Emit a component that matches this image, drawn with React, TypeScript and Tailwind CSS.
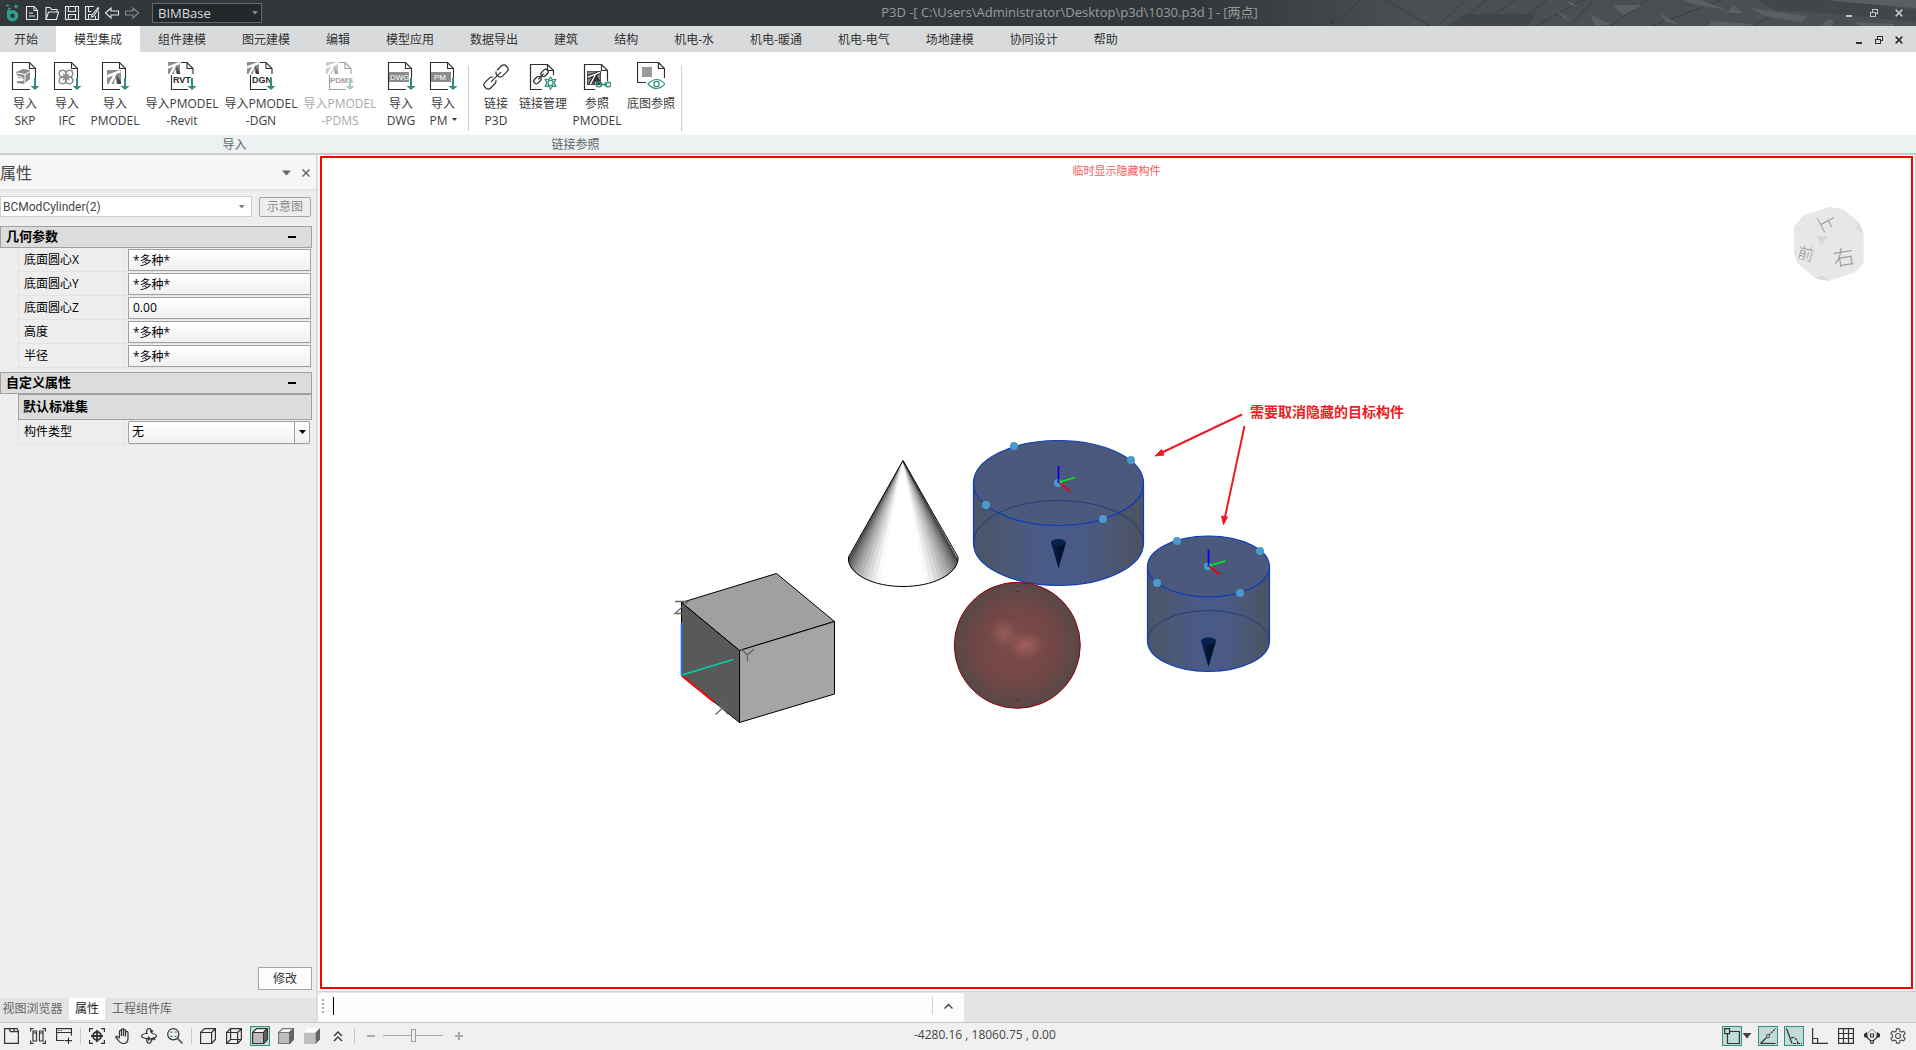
import React, { useState } from 'react';

const TABS = [
  '开始', '模型集成', '组件建模', '图元建模', '编辑', '模型应用', '数据导出', '建筑',
  '结构', '机电-水', '机电-暖通', '机电-电气', '场地建模', '协同设计', '帮助',
];

const GREEN = '#2f8f7c';

/* ---------- window controls ---------- */

const WindowControls: React.FC<{ className: string; gap: string }> = ({ className, gap }) => (
  <div className={`flex items-center ${gap} ${className}`}>
    <button aria-label="最小化">
      <svg width="10" height="10" viewBox="0 0 10 10" shapeRendering="crispEdges"><path d="M2 7h6v2H2z" fill="currentColor" /></svg>
    </button>
    <button aria-label="还原">
      <svg width="10" height="10" viewBox="0 0 10 10" shapeRendering="crispEdges" fill="none" stroke="currentColor">
        <path d="M1.5 4.5h5v4h-5zM1 4h6M3.5 4V1.5h5v4H7M3 1h6" />
      </svg>
    </button>
    <button aria-label="关闭">
      <svg width="10" height="10" viewBox="0 0 10 10" fill="none" stroke="currentColor" strokeWidth="1.7"><path d="M1.7 1.7l6.6 6.6M8.3 1.7L1.7 8.3" /></svg>
    </button>
  </div>
);

/* ---------- title bar ---------- */

const QuickButton: React.FC<{ label: string; dim?: boolean; children: React.ReactNode }> = ({ label, dim, children }) => (
  <button aria-label={label} className={`flex h-5 w-5 items-center justify-center ${dim ? 'text-[#85898b]' : 'text-[#e4e6e6]'}`}>
    <svg width="16" height="16" viewBox="0 0 16 16" fill="none" stroke="currentColor" strokeWidth="1.1">{children}</svg>
  </button>
);

const TitleBar: React.FC = () => (
  <header className="relative flex h-[26px] shrink-0 items-center bg-[#32373a] pl-0.5">
    <div className="absolute inset-y-0 right-0 w-[720px] overflow-hidden bg-linear-to-r from-[#32373a] to-[#4a4f52] to-30%">
      <svg width="720" height="26" viewBox="0 0 720 26" fill="none">
        <g stroke="#3a3f42" strokeWidth="1">
          <path d="M81 0L68 26M164 0l-23 22M190 0l44 26M270 0l-28 26M290 0l-30 26M319 0l-38 26M351 0l-34 26M386 0l-46 26" />
          <path d="M134 22h5" strokeWidth="4" />
          <path d="M398 0l-24 26M452 0l-38 26M526 0l-70 26M600 0l-42 26" />
        </g>
        <g fill="#5a5f62">
          <path d="M417 5l30 0-20 10zM395 15l20 9-16 2zM487 0h18l26 10-20-3-14-3zM555 8l56 8-5 6-38-6zM531 13l6-8 10 8zM465 13l18 12-14-3zM515 21l40 3v2h-42zM630 0h90v8l-50-4zM625 26l6-6 6 0 0 6zM658 22l40 2v2h-34zM358 8l18 13-8-3zM370 0l12 6-8-1z" />
        </g>
        <g fill="#3e4346" opacity=".7"><path d="M560 0h70l60 6 30 4v12l-80-8-60-4zM270 14h70l-8 12h-80z" /></g>
      </svg>
    </div>
    <div className="relative flex h-5 w-5 items-center justify-center">
      <svg width="16" height="18" viewBox="0 0 16 18" fill="none">
        <circle cx="8.5" cy="11.8" r="4" stroke="#2fa08c" strokeWidth="3.4" />
        <path d="M2 1.5h3M4 4.5h3M12 .5v4M10 2.5h4" stroke="#2fa08c" strokeWidth="1.3" />
        <path d="M3 6.5l3-1.5v4l-3 3z" fill="#2fa08c" />
      </svg>
    </div>
    <div className="relative flex">
      <QuickButton label="新建"><path d="M2.5 1.5h7.5l3.5 4v9h-11zM10 1.5v4h3.5M5 8h4M5 11h6" /></QuickButton>
      <QuickButton label="打开"><path d="M2 14.5V2.5h4l1.5 2h5.5v2.5M2 14.5h10.5l2-7.500H4.5z" /></QuickButton>
      <QuickButton label="保存"><path d="M1.5 1.5h13v13h-13zM4.5 1.5v5h7v-5M4.5 14.5v-5h7v5M6.5 12h1" /></QuickButton>
      <QuickButton label="另存为"><path d="M10 1.5H1.5v13h13V6M4.5 1.5v5h3M4.5 14.5v-5h3M11.5 14.5V11M14.5 2L8 10l-.5 2 2-.8L15 3" /></QuickButton>
      <QuickButton label="撤销"><path d="M1.5 8l5.5-5v3h7.5v4H7v3z" /></QuickButton>
      <QuickButton label="重做" dim><path d="M14.5 8L9 3v3H1.5v4H9v3z" /></QuickButton>
    </div>
    <div className="relative ml-2.5 w-[110px]">
      <select aria-label="工作空间" className="block h-5 w-full appearance-none border border-[#65696b] bg-[#25282a] pl-[5px] text-[13px] leading-4 text-[#dcdcdc] outline-none">
        <option>BIMBase</option>
      </select>
      <svg className="pointer-events-none absolute top-2 right-1" width="6" height="4" viewBox="0 0 6 4"><path d="M0 0h6L3 3.5z" fill="#8b8f91" /></svg>
    </div>
    <h1 className="relative flex-1 pl-12 text-center text-[13px] text-[#999c9d]">P3D -[ C:\Users\Administrator\Desktop\p3d\1030.p3d ] - [两点]</h1>
    <WindowControls className="relative pr-3 pl-[15px] text-[#c3c5c6]" gap="gap-[15px]" />
  </header>
);

/* ---------- ribbon ---------- */

const DownArrow: React.FC = () => (
  <path d="M22 16h2v8h3.5L23 28l-4.5-4H22z" fill={GREEN} />
);

const ModelLogo: React.FC<{ x: number; y: number; size?: number }> = ({ x, y, size = 14 }) => (
  <svg x={x} y={y} width={size} height={size} viewBox="0 0 14 14">
    <path d="M0 0h14v14H0z" fill="#8c8c8c" />
    <path d="M0 5L13 0l1 2.5-4.5 1.500L4.500 14H1.500L6 5.500 0 8z" fill="#fff" />
    <path d="M9.500 5L14 12v2h-3.500z" fill="#444" />
    <path d="M8 7l2 7H7z" fill="#fff" />
  </svg>
);

const ImportIcon: React.FC<{ kind: string }> = ({ kind }) => {
  const wide = ['RVT', 'DGN', 'PDMS'].includes(kind);
  return (
    <svg className="overflow-visible" width={wide ? 28 : 26} height="28" viewBox={wide ? '0 0 28 28' : '0 0 26 28'} fontFamily="Liberation Sans, sans-serif" fontWeight="bold">
      <path
        d={wide ? 'M13 .5h6l6 6V12M19 .5v6h6M3.5 13v14.5H20' : 'M18 27.5H.5V.5h17l6 6V17M17.5 .5v6h6'}
        stroke="#2e2e2e"
        strokeWidth="1.1"
        fill="none"
      />
      {kind === 'SKP' && (
        <g>
          <path d="M4 10l7-3 7 1v9l-6 5-7-1 0-2 6 0 1-2-6-1z" fill="#8f8f8f" />
          <path d="M5 11l8 1.5V22M5 14l5 1.5v2l-5-.5M13 12.500l5-3" stroke="#fff" fill="none" />
        </g>
      )}
      {kind === 'IFC' && (
        <g fill="none" stroke="#8f8f8f" strokeWidth="1.5">
          <circle cx="8.500" cy="11.500" r="3.3" /><circle cx="15.500" cy="11.500" r="3.3" />
          <circle cx="8.500" cy="18.500" r="3.3" /><circle cx="15.500" cy="18.500" r="3.3" />
          <path d="M9 12l6 6M15 12l-6 6" />
        </g>
      )}
      {kind === 'PMODEL' && <ModelLogo x={5} y={8} />}
      {wide && (
        <>
          <ModelLogo x={0} y={0} size={12} />
          <text x={kind === 'PDMS' ? 4 : 5} y="21" fontSize={kind === 'PDMS' ? 8 : 9} fill="#2b2b2b">{kind}</text>
        </>
      )}
      {(kind === 'DWG' || kind === 'PM') && (
        <>
          <path d="M1 10h20v10H1z" fill="#8c8c8c" />
          <text x={kind === 'PM' ? 4 : 2} y="18" fontSize="8" fontWeight="normal" fill="#fff">{kind}</text>
        </>
      )}
      <g transform={wide ? 'translate(1 0)' : undefined}><DownArrow /></g>
    </svg>
  );
};

const LinkIcon: React.FC<{ kind: string }> = ({ kind }) => (
  <svg width="28" height="28" viewBox="0 0 28 28" fill="none" stroke="#2e2e2e" strokeWidth="1.2">
    {kind === 'link' && (
      <g transform="translate(14 15) rotate(-45)">
        <rect x="-15" y="-4" width="13" height="8" rx="3.5" strokeDasharray="32 4" strokeDashoffset="-14" />
        <rect x="2" y="-4" width="13" height="8" rx="3.5" strokeDasharray="34 4" />
        <path d="M-7 0H7" />
      </g>
    )}
    {kind === 'manage' && (
      <>
        <path d="M13 27.5H1.5v-25h17l6 6V13M18.5 2.5v6h6" />
        <g transform="translate(12 14.5) rotate(-45)">
          <rect x="-9" y="-2.5" width="8" height="5" rx="2.2" />
          <rect x="1" y="-2.5" width="8" height="5" rx="2.2" />
          <path d="M-4 0h8" />
        </g>
        <path d="M21.5 15l1.8 2.8 3.5-.4-1.600 3.600 1.600 3.400-3.5-.2-1.800 3-1.800-3-3.500.2 1.600-3.400-1.600-3.600 3.500.4z" stroke={GREEN} fill="#fff" />
        <circle cx="21.5" cy="21" r="2.6" stroke={GREEN} />
      </>
    )}
    {kind === 'model' && (
      <>
        <path d="M12 27.5H1.5v-25h17l6 6V19M18.5 2.5v6h6" />
        <ModelLogo x={4} y={9} />
        <path d="M13 22.5c0-3 6-3 6 0s-6 3-6 0M22 22.5c0-3 6-3 6 0s-6 3-6 0M17 22.5h7" stroke={GREEN} strokeWidth="1.4" />
      </>
    )}
    {kind === 'view' && (
      <>
        <path d="M9 20.5H.5V.5h21l6 6V16M21.5 .5v6h6" />
        <path d="M5 5h10v10H5z" fill="#999" stroke="none" />
        <path d="M11 22q8.500-9 17 0q-8.500 9-17 0z" stroke={GREEN} />
        <circle cx="19.5" cy="22" r="2.6" stroke={GREEN} />
      </>
    )}
  </svg>
);

interface RibbonButtonProps {
  icon: React.ReactNode;
  lines: string[];
  width: string;
  disabled?: boolean;
  menu?: boolean;
}

const RibbonButton: React.FC<RibbonButtonProps> = ({ icon, lines, width, disabled, menu }) => (
  <button disabled={disabled} className={`flex shrink-0 flex-col items-center gap-[5px] text-xs text-[#3c3c3c] disabled:opacity-45 ${width}`}>
    {icon}
    <span className="flex flex-col items-center leading-[17px] whitespace-nowrap">
      <span>{lines[0]}</span>
      {lines[1] && (
        <span className="flex items-center gap-1">
          {lines[1]}
          {menu && <svg width="5" height="8" viewBox="0 0 5 8"><path d="M0 1h5L2.5 4z" fill="#333" /></svg>}
        </span>
      )}
    </span>
  </button>
);

const RibbonGroup: React.FC<{ title: string; children: React.ReactNode; className: string }> = ({ title, children, className }) => (
  <section className="flex flex-col">
    <div className={`flex h-[83px] items-start pt-2.5 ${className}`}>
      {children}
      <div className="ml-1 h-[65px] w-px self-center bg-[#cfcfcf]" />
    </div>
    <h2 className="h-[18px] bg-[#edf1f2] pt-px text-center text-xs leading-[17px] text-[#606468]">{title}</h2>
  </section>
);

const Ribbon: React.FC = () => {
  const [active, setActive] = useState('模型集成');

  return (
    <div className="shrink-0 border-b-2 border-[#c9cccf]">
      <nav className="flex h-[26px] bg-[#d9dadc]">
        <div className="-ml-1 flex flex-1">
          {TABS.map(t => (
            <button
              key={t}
              onClick={() => setActive(t)}
              className={`px-[18px] pt-0.5 text-xs text-[#333] ${t === active ? 'bg-white' : ''}`}
            >
              {t}
            </button>
          ))}
        </div>
        <WindowControls className="pt-px pr-3 text-[#2e3133]" gap="gap-[10px]" />
      </nav>
      <div className="flex bg-white">
        <RibbonGroup title="导入" className="pl-1">
          <RibbonButton width="w-[42px]" icon={<ImportIcon kind="SKP" />} lines={['导入', 'SKP']} />
          <RibbonButton width="w-[42px]" icon={<ImportIcon kind="IFC" />} lines={['导入', 'IFC']} />
          <RibbonButton width="w-[54px]" icon={<ImportIcon kind="PMODEL" />} lines={['导入', 'PMODEL']} />
          <RibbonButton width="w-[80px]" icon={<ImportIcon kind="RVT" />} lines={['导入PMODEL', '-Revit']} />
          <RibbonButton width="w-[78px]" icon={<ImportIcon kind="DGN" />} lines={['导入PMODEL', '-DGN']} />
          <RibbonButton width="w-[80px]" icon={<ImportIcon kind="PDMS" />} lines={['导入PMODEL', '-PDMS']} disabled />
          <RibbonButton width="w-[42px]" icon={<ImportIcon kind="DWG" />} lines={['导入', 'DWG']} />
          <RibbonButton width="w-[42px]" icon={<ImportIcon kind="PM" />} lines={['导入', 'PM']} menu />
        </RibbonGroup>
        <RibbonGroup title="链接参照" className="pl-1.5">
          <RibbonButton width="w-[42px]" icon={<LinkIcon kind="link" />} lines={['链接', 'P3D']} />
          <RibbonButton width="w-[52px]" icon={<LinkIcon kind="manage" />} lines={['链接管理']} />
          <RibbonButton width="w-[56px]" icon={<LinkIcon kind="model" />} lines={['参照', 'PMODEL']} />
          <RibbonButton width="w-[52px]" icon={<LinkIcon kind="view" />} lines={['底图参照']} />
        </RibbonGroup>
        <div className="flex flex-1 flex-col justify-end"><div className="h-[18px] bg-[#edf1f2]" /></div>
      </div>
    </div>
  );
};

/* ---------- property panel ---------- */

const FIELDS = [
  { id: 'cx', label: '底面圆心X', value: '*多种*' },
  { id: 'cy', label: '底面圆心Y', value: '*多种*' },
  { id: 'cz', label: '底面圆心Z', value: '0.00' },
  { id: 'height', label: '高度', value: '*多种*' },
  { id: 'radius', label: '半径', value: '*多种*' },
];

const SectionHeader: React.FC<{ title: string }> = ({ title }) => (
  <h3 className="flex h-[22px] items-center justify-between border border-[#a0a0a0] bg-[#dcdcdc] pr-[15px] pl-[5px] text-[13px] font-bold text-black">
    {title}
    <button aria-label={`折叠${title}`} className="flex h-4 items-center"><span className="h-0.5 w-2 bg-black" /></button>
  </h3>
);

const PropertyPanel: React.FC = () => (
  <aside className="flex w-[316px] shrink-0 flex-col bg-[#eeeeee]">
    <div className="flex h-[36px] items-center justify-between border-b-2 border-[#e4e4e4] bg-[#f6f6f6] pt-0.5 pr-1.5">
      <h2 className="text-base text-[#444]">属性</h2>
      <div className="flex items-center gap-[11px] text-[#666]">
        <button aria-label="选项"><svg width="9" height="6" viewBox="0 0 9 6"><path d="M0 .5h9L4.500 5.500z" fill="currentColor" /></svg></button>
        <button aria-label="关闭面板"><svg width="8" height="8" viewBox="0 0 8 8" stroke="currentColor" strokeWidth="1.5"><path d="M.5 .5l7 7M7.500 .5l-7 7" /></svg></button>
      </div>
    </div>
    <div className="flex items-center gap-[7px] py-[5px] pr-[5px]">
      <div className="relative flex-1">
        <select aria-label="构件" className="block h-[21px] w-full appearance-none border border-[#cfcfcf] bg-white pl-0.5 font-[Roboto,sans-serif] text-xs leading-4 text-[#444] outline-none">
          <option>BCModCylinder(2)</option>
        </select>
        <svg className="pointer-events-none absolute top-[9px] right-[7px]" width="6" height="4" viewBox="0 0 6 4"><path d="M0 0h5.500L2.700 3.500z" fill="#777" /></svg>
      </div>
      <button className="h-[20px] w-[52px] rounded-[2px] border border-[#a6a6a6] text-xs leading-4 text-[#8a8a8a]">示意图</button>
    </div>
    <div className="mt-1 flex flex-1 flex-col pr-1 text-xs text-black">
      <SectionHeader title="几何参数" />
      {FIELDS.map(f => (
        <div key={f.id} className="ml-[18px] flex h-[24px] items-center border-b border-l border-[#e3e3e3]">
          <label htmlFor={f.id} className="flex h-full w-[106px] items-center border-r border-[#e3e3e3] pl-[5px]">{f.label}</label>
          <input id={f.id} defaultValue={f.value} className="mr-px ml-[3px] h-[22px] min-w-0 flex-1 border border-[#a0a0a0] bg-linear-to-b from-white to-[#f0f0f0] pl-1 outline-none" />
        </div>
      ))}
      <div className="mt-1"><SectionHeader title="自定义属性" /></div>
      <h4 className="ml-[18px] flex h-[26px] items-center border border-[#a0a0a0] bg-[#dcdcdc] pl-1 text-[13px] font-bold">默认标准集</h4>
      <div className="ml-[18px] flex h-[25px] items-center border-b border-l border-[#e3e3e3]">
        <label htmlFor="type" className="flex h-full w-[106px] items-center border-r border-[#e3e3e3] pl-[5px]">构件类型</label>
        <div className="relative mr-0.5 ml-[3px] flex-1">
          <select id="type" className="block h-[23px] w-full appearance-none rounded-[2px] border border-[#a0a0a0] bg-linear-to-b from-white to-[#f0f0f0] pl-[3px] leading-4 outline-none">
            <option>无</option>
          </select>
          <div className="pointer-events-none absolute inset-y-0 right-0 flex w-4 items-center justify-center border-l border-[#a0a0a0]">
            <svg width="7" height="4" viewBox="0 0 7 4"><path d="M0 0h7L3.5 4z" fill="#000" /></svg>
          </div>
        </div>
      </div>
      <button className="mt-auto mb-2 h-[23px] w-[54px] self-end border border-[#a6a6a6] bg-[#fdfdfd] leading-4 text-[#333]">修改</button>
    </div>
    <div className="flex h-6 bg-[#e4e4e4] pb-0.5 text-xs text-[#666]">
      <button className="w-[69px] pr-1">视图浏览器</button>
      <button className="w-[36px] bg-white text-[#222]">属性</button>
      <button className="px-[7px]">工程组件库</button>
    </div>
  </aside>
);

/* ---------- 3D viewport ---------- */

// grey level around the cone base, 0 = left silhouette, 1 = right silhouette
const coneShade = (t: number) => {
  const d = Math.min(t / 0.36, (1 - t) / 0.36, 1);
  return Math.round(48 + 207 * Math.pow(d, 0.85));
};

const Cone: React.FC = () => {
  const n = 30;
  const pt = (i: number) => {
    const a = Math.PI - (i / n) * Math.PI;
    return `${(903 + 54.5 * Math.cos(a)).toFixed(1)} ${(559 + 27.5 * Math.sin(a)).toFixed(1)}`;
  };
  return (
    <g>
      {Array.from({ length: n }, (_, i) => {
        const g = coneShade((i + 0.5) / n);
        const c = `rgb(${g},${g},${g})`;
        return <path key={i} d={`M903 461L${pt(i)}L${pt(i + 1)}z`} fill={c} stroke={c} strokeWidth=".8" strokeLinejoin="round" />;
      })}
      <path d="M903 460.5L848.5 557v3c2 15 25 26.500 54.5 26.500s52.500-11.500 55-26.500v-3z" fill="none" stroke="#000" />
    </g>
  );
};

interface CylinderProps {
  cx: number;
  top: number;
  bottom: number;
  rx: number;
  arrowY: number;
  grips: number[][];
}

const Cylinder: React.FC<CylinderProps> = ({ cx, top, bottom, rx, arrowY, grips }) => {
  const ry = rx / 2;
  return (
    <g>
      <path d={`M${cx - rx} ${top}V${bottom}a${rx} ${ry} 0 0 0 ${2 * rx} 0V${top}z`} fill="url(#side)" />
      <ellipse cx={cx} cy={top} rx={rx} ry={ry} fill="#4a597c" />
      <path d={`M${cx - rx} ${bottom}a${rx} ${ry} 0 0 1 ${2 * rx} 0`} fill="none" stroke="#253a78" />
      <g fill="none" stroke="#0a3cbc" strokeWidth="1.2">
        <ellipse cx={cx} cy={top} rx={rx} ry={ry} />
        <path d={`M${cx - rx} ${top}V${bottom}a${rx} ${ry} 0 0 0 ${2 * rx} 0V${top}`} />
      </g>
      <path d={`M${cx - 7.5} ${arrowY}h15l-7.5 26z`} fill="url(#tip)" />
      <ellipse cx={cx} cy={arrowY} rx="7.5" ry="3.5" fill="#04214f" />
      {grips.map(([x, y]) => <circle key={x} cx={x} cy={y} r="4" fill="#4a9bcc" />)}
      <circle cx={cx - 0.5} cy={top} r="4" fill="#4a9bcc" />
      <g strokeWidth="1.7">
        <path d={`M${cx} ${top}v-17`} stroke="#0000f0" />
        <path d={`M${cx + 1} ${top - 1}l16 -4.5`} stroke="#00f000" />
        <path d={`M${cx + 1} ${top}l10 8`} stroke="#f00000" />
      </g>
    </g>
  );
};

const ViewCube: React.FC = () => (
  <svg className="absolute top-[49px] right-[47px]" width="70" height="74" viewBox="162 171 210 222" fontFamily="Noto Sans CJK SC, sans-serif" fontWeight="300" fill="#999">
    <path d="M267 171l41 6 48 38 15 35v88l-25 28-78 26-40-6-56-46-10-30v-80l28-34z" fill="#e7e7e7" />
    <path d="M226 257l41 3-24 31zM356 217l14 33-24-12zM243 374l25 18-40-6z" fill="#dadada" />
    <path d="M172 222l54 35 17 34v84M267 260l79-22M243 291l24-31" stroke="#efefef" strokeWidth="2" fill="none" />
    <text x="260" y="236" fontSize="54" textAnchor="middle" transform="rotate(62 260 217)">上</text>
    <text x="198" y="329" fontSize="48" textAnchor="middle" transform="rotate(14 198 310)">前</text>
    <text x="311" y="345" fontSize="64" textAnchor="middle" transform="rotate(-10 311 322)">右</text>
  </svg>
);

const Viewport: React.FC = () => (
  <div className="relative mt-px mr-0.5 ml-0.5 flex-1 overflow-hidden border-2 border-[#ff0000] bg-white">
    <svg className="absolute inset-0 h-full w-full">
      <defs>
        <linearGradient id="side">
          <stop offset="0" stopColor="#4c5566" />
          <stop offset=".4" stopColor="#4a5a86" />
          <stop offset=".65" stopColor="#4a5a86" />
          <stop offset="1" stopColor="#4c5360" />
        </linearGradient>
        <linearGradient id="tip">
          <stop offset="0" stopColor="#052050" />
          <stop offset="1" stopColor="#020b1c" />
        </linearGradient>
        <radialGradient id="ball">
          <stop offset="0" stopColor="#7c4a48" />
          <stop offset=".6" stopColor="#724746" />
          <stop offset="1" stopColor="#574848" />
        </radialGradient>
        <radialGradient id="glow">
          <stop offset="0" stopColor="#a86462" />
          <stop offset="1" stopColor="#a86462" stopOpacity="0" />
        </radialGradient>
      </defs>
      <g transform="translate(-322 -158)">
        <g stroke="#000" strokeLinejoin="round">
          <path d="M681.5 602.5L776.5 573.5L834.5 621.5L739.5 650.5z" fill="#a0a0a0" />
          <path d="M681.5 602.5L739.5 650.5V722.5L681.5 675.5z" fill="#595959" />
          <path d="M739.5 650.5L834.5 621.5V694L739.5 722.5z" fill="#a5a5a5" />
        </g>
        <g strokeWidth="1.7">
          <path d="M681.5 623v53" stroke="#1e78ff" />
          <path d="M682 675l51-15.5" stroke="#00d2a0" />
          <path d="M682 676l32 26" stroke="#ff0000" />
        </g>
        <g stroke="#666" strokeWidth="1.3" fill="none">
          <path d="M675 601.5h13L675 613.5h13" />
          <path d="M741 649l6.5 6 6.5-6M747.5 655v6" />
          <path d="M728.5 702.5l-13 12M719 705l9.5 9.5" />
        </g>
        <Cone />
        <Cylinder cx={1058.5} top={483} bottom={543} rx={85} arrowY={542.5} grips={[[1014, 446], [1131, 460], [986, 505], [1103, 519]]} />
        <Cylinder cx={1208.5} top={566.5} bottom={641} rx={61} arrowY={641} grips={[[1177, 541], [1260, 551], [1157, 583], [1240, 593]]} />
        <circle cx="1017.3" cy="645.3" r="63" fill="url(#ball)" stroke="#960000" />
        <circle cx="1004" cy="633" r="15" fill="url(#glow)" opacity=".65" />
        <ellipse cx="1026" cy="645.5" rx="19" ry="14" fill="url(#glow)" opacity=".85" />
        <path d="M1017 591h1v1h-1zM1017 700h1v1h-1z" fill="#300" />
        <g stroke="#ed1c24" strokeWidth="2" fill="#ed1c24">
          <path d="M1242 414.5L1162 452.5" />
          <path d="M1244.5 426L1225 517" />
          <path d="M1155 456l6.5-6.500 2.500 5.500zM1223.5 524.5l-2-8.500 6 1z" strokeWidth="1" />
        </g>
        <text x="1250" y="417" fontSize="14" fontWeight="bold" fill="#ed1c24">需要取消隐藏的目标构件</text>
      </g>
    </svg>
    <p className="relative pt-[5px] text-center text-[11px] leading-4 text-[#ff5555]">临时显示隐藏构件</p>
    <ViewCube />
  </div>
);

const CommandLine: React.FC = () => (
  <div className="flex h-[31px] shrink-0 border-t border-[#d2d2d2] bg-[#e5e5e5] pt-px">
    <div className="flex w-[646px] items-center rounded-[3px] bg-[#fdfdfd] pb-1">
      <svg className="ml-1" width="3" height="16" viewBox="0 0 3 16"><path d="M0 1h2v2H0zM0 5h2v2H0zM0 9h2v2H0zM0 13h2v2H0z" fill="#aaa" /></svg>
      <label className="ml-2 flex h-[18px] flex-1 items-center border-l border-black">
        <input aria-label="命令行" className="w-full bg-transparent pl-1 text-xs outline-none" />
      </label>
      <button aria-label="展开" className="flex h-[17px] w-8 items-center justify-center border-l border-[#d0d0d0]">
        <svg width="9" height="6" viewBox="0 0 9 6" fill="none" stroke="#444" strokeWidth="1.5"><path d="M.5 5.5l4-4 4 4" /></svg>
      </button>
    </div>
  </div>
);

/* ---------- status bar ---------- */

const StatusButton: React.FC<{ label: string; on?: boolean; children: React.ReactNode }> = ({ label, on, children }) => (
  <button aria-label={label} aria-pressed={on} className={`flex h-5 w-5 items-center justify-center ${on ? 'bg-[#c1dcd6] outline-1 -outline-offset-1 outline-[#2f8f7c]' : ''}`}>
    <svg width="16" height="16" viewBox="0 0 16 16" fill="none" stroke="#333" strokeWidth="1.2">{children}</svg>
  </button>
);

const Divider: React.FC = () => <div className="h-4 w-px bg-[#c8c8c8]" />;

const CUBE_EDGES = 'M.6 4.5h11v11h-11zM.6 4.5L4.6 .6h10.8v10.9l-3.8 4M11.6 4.5l3.8-3.9';

const StatusBar: React.FC = () => (
  <footer className="flex h-[28px] shrink-0 items-center border-t border-[#c6c6c6] bg-[#f0f0f0] pr-2 pb-0.5 pl-0.5">
    <div className="flex items-center gap-1.5">
      <StatusButton label="文件"><path d="M.6 15.400V.6h4.400l1.400 3h8v11.800zM5 .6h4.500l1.200 3M9.500 .6h3.500l1.400 3" /></StatusButton>
      <StatusButton label="平铺"><path d="M3.500 .6H.6v3M12.500 .6h2.900v3M.6 12.500v2.900h3M15.400 12.500v2.900h-3M3 3h3.500v10H3zM9.500 3H13v10H9.500zM3 5h3.500M9.500 5H13" /></StatusButton>
      <StatusButton label="新窗口"><path d="M8.500 12.500H.6V.6h14.800v7M.6 4.500h14.800M2.500 2.500h1M5 2.500h1M12.500 9.500V16M9 12.700h7" /></StatusButton>
      <Divider />
      <StatusButton label="全图">
        <path d="M4 .6H.6V4M12 .6h3.400V4M.6 12v3.400H4M15.400 12v3.400H12" />
        <circle cx="8" cy="8" r="4" strokeWidth="1.8" />
        <path d="M8 2v12M2 8h12" strokeWidth="1.8" />
      </StatusButton>
      <StatusButton label="平移"><path d="M4.500 9.500V3.500c0-1.500 2-1.500 2 0V8V1.800c0-1.500 2-1.500 2 0V8V2.500c0-1.500 2-1.500 2 0V8.500V4.500c0-1.500 2.500-1.500 2.500 0V10c0 3-1 5.500-4 5.500-3.500 0-4.500-1.500-8-5.800-.8-1 .8-1.800 1.700-1l1.800 1.500" /></StatusButton>
      <StatusButton label="旋转">
        <path d="M5.500 5c0-6 5-6 5 0M5.500 10c0 7 5 7 5 0M5 5.500c-6 1-6 4 0 5l3 .3M11 5.500c6 1 6 4 0 5M5 5.500h2" />
        <path d="M9 2.500l1.700 3 1.500-3zM7 8.500l3 2.200-3 2zM11 12l1.500-3 2 2.500z" fill="#333" strokeWidth=".5" />
      </StatusButton>
      <StatusButton label="缩放">
        <circle cx="6.3" cy="6.3" r="5.6" />
        <path d="M10.500 10.500l5 5" strokeWidth="1.8" stroke="#666" />
        <path d="M4 5V4h1.500M7.500 4H9v1M4 7.500v1h1.500M7.500 8.500H9v-1" stroke={GREEN} />
      </StatusButton>
      <Divider />
      <StatusButton label="隐藏线"><path d={CUBE_EDGES} /></StatusButton>
      <StatusButton label="线框"><path d={CUBE_EDGES} /><path d="M4.600 .6v10.900h10.800M4.600 11.500l-4 4" /></StatusButton>
      <StatusButton label="带边着色" on>
        <path d="M.6 4.500h11v11h-11z" fill="#bdbdbd" />
        <path d="M.6 4.500L4.600 .6h10.800l-3.800 3.900z" fill="#fff" />
        <path d="M11.600 4.500l3.800-3.900v10.900l-3.800 4z" fill="#666" />
      </StatusButton>
      <StatusButton label="着色">
        <path d="M.6 4.500h11v11h-11z" fill="#bdbdbd" stroke="#777" />
        <path d="M.6 4.500L4.600 .6h10.800l-3.800 3.900z" fill="#fff" stroke="#777" />
        <path d="M11.600 4.500l3.800-3.900v10.900l-3.800 4z" fill="#666" stroke="#666" />
      </StatusButton>
      <StatusButton label="真实">
        <path d="M0 4.500h11.600V16H0z" fill="#bdbdbd" stroke="none" />
        <path d="M0 4.500L4.600 0H16l-4.400 4.500z" fill="#fff" stroke="none" />
        <path d="M11.600 4.500L16 0v11.500L11.600 16z" fill="#666" stroke="none" />
      </StatusButton>
      <StatusButton label="更多"><path d="M4 8l4-4 4 4M4 13l4-4 4 4" strokeWidth="1.4" /></StatusButton>
      <Divider />
      <StatusButton label="缩小"><path d="M4 8h8" stroke="#aaa" strokeWidth="2" /></StatusButton>
      <input
        type="range"
        aria-label="缩放比例"
        defaultValue={50}
        className="-ml-1 h-4 w-[60px] appearance-none bg-transparent [&::-webkit-slider-runnable-track]:h-px [&::-webkit-slider-runnable-track]:bg-[#a8a8a8] [&::-webkit-slider-thumb]:-mt-[6px] [&::-webkit-slider-thumb]:h-[13px] [&::-webkit-slider-thumb]:w-[5px] [&::-webkit-slider-thumb]:appearance-none [&::-webkit-slider-thumb]:border [&::-webkit-slider-thumb]:border-[#a0a0a0] [&::-webkit-slider-thumb]:bg-[#f0f0f0]"
      />
      <StatusButton label="放大"><path d="M4 8h8M8 4v8" stroke="#aaa" strokeWidth="2" /></StatusButton>
    </div>
    <p className="flex-1 pb-0.5 pl-[445px] text-xs whitespace-pre text-[#444]">-4280.16 , 18060.75 , 0.00</p>
    <div className="flex items-center gap-1.5">
      <div className="flex items-center">
        <StatusButton label="捕捉" on><path d="M.6 .6h5v5h-5zM5.600 3.500h9.800v12H3.500V5.600" /></StatusButton>
        <svg width="10" height="6" viewBox="0 0 10 6"><path d="M.5 0h9L5 5.500z" fill="#444" /></svg>
      </div>
      <StatusButton label="极轴" on>
        <path d="M.5 15.500h15" /><path d="M.5 15.500L7 9" /><path d="M9 7l7-7" strokeDasharray="2 1" /><circle cx="8" cy="8" r="1.6" stroke="#666" />
      </StatusButton>
      <StatusButton label="角度" on><path d="M5 10c3-2 6 1 7 5.500M7 15.500h9" strokeDasharray="3 1" /><path d="M.5 .5l5.500 15" /></StatusButton>
      <StatusButton label="正交"><path d="M.6 0v15.400H16M.6 10.500h5v5" /></StatusButton>
      <StatusButton label="栅格"><path d="M.6 .6h14.800v14.800H.6zM5.500 .6v14.800M10.500 .6v14.800M.6 5.500h14.800M.6 10.500h14.800" /></StatusButton>
      <StatusButton label="导航">
        <path d="M3 6l5-5 5 5" stroke="#aaa" /><path d="M3 9.500l5 4.500 5-4.500" />
        <path d="M0 9V6l3-2 1 6zM16 9V6l-3-2-1 6z" fill="#333" stroke="none" />
        <path d="M6.500 6h3v3h-3z" /><circle cx="8" cy="14" r="1.500" fill="#f0f0f0" />
      </StatusButton>
      <StatusButton label="设置">
        <path d="M6.600 .8h2.800l.5 2.300 1.500.9 2.300-.7 1.400 2.400-1.700 1.600v1.500l1.700 1.600-1.400 2.400-2.300-.7-1.500.9-.5 2.200H6.600l-.5-2.200-1.500-.9-2.300.7L.9 10.400l1.700-1.600V7.300L.9 5.700l1.400-2.400 2.300.7 1.500-.9z" stroke="#555" />
        <circle cx="8" cy="8" r="2.500" stroke="#555" />
      </StatusButton>
    </div>
  </footer>
);

export default function App() {
  return (
    <div className="flex h-screen flex-col overflow-hidden bg-[#e5e5e5] font-['Open_Sans','Noto_Sans_CJK_SC',sans-serif]">
      <TitleBar />
      <Ribbon />
      <main className="flex min-h-0 flex-1">
        <PropertyPanel />
        <div className="flex min-w-0 flex-1 flex-col border-l-2 border-[#dcdcdc]">
          <div className="flex min-h-0 flex-1 border-r border-[#d2d2d2] bg-white pb-0.5">
            <Viewport />
          </div>
          <CommandLine />
        </div>
      </main>
      <StatusBar />
    </div>
  );
}
